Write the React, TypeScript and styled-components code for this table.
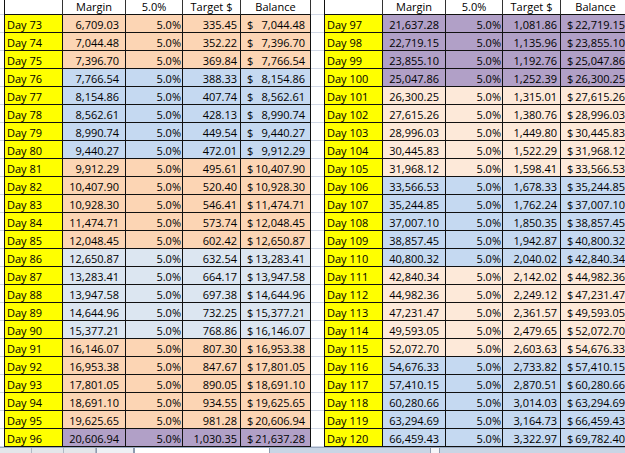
import React from 'react';
import styled, { createGlobalStyle } from 'styled-components';

const GlobalStyle = createGlobalStyle`
  html, body { margin: 0; padding: 0; background: #fff; }
  body { font-family: "Open Sans", "Liberation Sans", sans-serif; }
`;

type Tone = 'peach' | 'palePeach' | 'blue' | 'paleBlue' | 'purple';

const toneColor: Record<Tone, string> = {
  peach: '#FCD5B4',
  palePeach: '#FDE9D9',
  blue: '#C5D9F1',
  paleBlue: '#DCE6F1',
  purple: '#B1A0C7',
};

type Row = { day: number; margin: string; target: string; balance: string };

const leftRows: Row[] = [
  [73, '6,709.03', '335.45', '7,044.48'],
  [74, '7,044.48', '352.22', '7,396.70'],
  [75, '7,396.70', '369.84', '7,766.54'],
  [76, '7,766.54', '388.33', '8,154.86'],
  [77, '8,154.86', '407.74', '8,562.61'],
  [78, '8,562.61', '428.13', '8,990.74'],
  [79, '8,990.74', '449.54', '9,440.27'],
  [80, '9,440.27', '472.01', '9,912.29'],
  [81, '9,912.29', '495.61', '10,407.90'],
  [82, '10,407.90', '520.40', '10,928.30'],
  [83, '10,928.30', '546.41', '11,474.71'],
  [84, '11,474.71', '573.74', '12,048.45'],
  [85, '12,048.45', '602.42', '12,650.87'],
  [86, '12,650.87', '632.54', '13,283.41'],
  [87, '13,283.41', '664.17', '13,947.58'],
  [88, '13,947.58', '697.38', '14,644.96'],
  [89, '14,644.96', '732.25', '15,377.21'],
  [90, '15,377.21', '768.86', '16,146.07'],
  [91, '16,146.07', '807.30', '16,953.38'],
  [92, '16,953.38', '847.67', '17,801.05'],
  [93, '17,801.05', '890.05', '18,691.10'],
  [94, '18,691.10', '934.55', '19,625.65'],
  [95, '19,625.65', '981.28', '20,606.94'],
  [96, '20,606.94', '1,030.35', '21,637.28'],
].map(([day, margin, target, balance]) => ({ day, margin, target, balance } as Row));

const rightRows: Row[] = [
  [97, '21,637.28', '1,081.86', '22,719.15'],
  [98, '22,719.15', '1,135.96', '23,855.10'],
  [99, '23,855.10', '1,192.76', '25,047.86'],
  [100, '25,047.86', '1,252.39', '26,300.25'],
  [101, '26,300.25', '1,315.01', '27,615.26'],
  [102, '27,615.26', '1,380.76', '28,996.03'],
  [103, '28,996.03', '1,449.80', '30,445.83'],
  [104, '30,445.83', '1,522.29', '31,968.12'],
  [105, '31,968.12', '1,598.41', '33,566.53'],
  [106, '33,566.53', '1,678.33', '35,244.85'],
  [107, '35,244.85', '1,762.24', '37,007.10'],
  [108, '37,007.10', '1,850.35', '38,857.45'],
  [109, '38,857.45', '1,942.87', '40,800.32'],
  [110, '40,800.32', '2,040.02', '42,840.34'],
  [111, '42,840.34', '2,142.02', '44,982.36'],
  [112, '44,982.36', '2,249.12', '47,231.47'],
  [113, '47,231.47', '2,361.57', '49,593.05'],
  [114, '49,593.05', '2,479.65', '52,072.70'],
  [115, '52,072.70', '2,603.63', '54,676.33'],
  [116, '54,676.33', '2,733.82', '57,410.15'],
  [117, '57,410.15', '2,870.51', '60,280.66'],
  [118, '60,280.66', '3,014.03', '63,294.69'],
  [119, '63,294.69', '3,164.73', '66,459.43'],
  [120, '66,459.43', '3,322.97', '69,782.40'],
].map(([day, margin, target, balance]) => ({ day, margin, target, balance } as Row));

const toneFor = (day: number): Tone => {
  if (day <= 75) return 'peach';
  if (day <= 80) return 'blue';
  if (day <= 85) return 'peach';
  if (day <= 90) return 'paleBlue';
  if (day <= 95) return 'peach';
  if (day <= 100) return 'purple';
  if (day <= 105) return 'palePeach';
  if (day <= 110) return 'blue';
  if (day <= 115) return 'palePeach';
  return 'blue';
};

const Sheet = styled.div`
  width: 625px;
  height: 453px;
  overflow: hidden;
  display: flex;
  flex-direction: column;
  background: #fff;
`;

const GridArea = styled.div`
  display: flex;
  height: 447px;
  flex: none;
  overflow: hidden;
`;

const Gutter = styled.div<{ $w: number }>`
  width: ${(p) => p.$w}px;
  flex: none;
  display: grid;
  grid-template-rows: 15px repeat(24, 18px);
`;

const GutterCell = styled.div`
  box-sizing: border-box;
  border-bottom: 1px solid #d0d7e5;
`;

const Table = styled.div`
  flex: none;
  display: grid;
  grid-template-columns: 58px 63px 57px 58px 70px;
  grid-template-rows: 15px repeat(24, 18px);
  border-left: 1px solid #111;
  font-size: 11px;
  color: #000;
`;

const HeadCell = styled.div`
  box-sizing: border-box;
  border-right: 1px solid #333;
  border-bottom: 1px solid #111;
  background: #fff;
  text-align: center;
  line-height: 14px;
  white-space: nowrap;
`;

const Cell = styled.div<{ $tone: Tone; $pad: number }>`
  box-sizing: border-box;
  border-right: 1px solid #111;
  border-bottom: 1px solid #111;
  background: ${(p) => toneColor[p.$tone]};
  padding: 3px ${(p) => p.$pad}px 0 0;
  line-height: 14px;
  text-align: right;
  white-space: nowrap;
`;

const DayCell = styled.div`
  box-sizing: border-box;
  border-right: 1px solid #111;
  border-bottom: 1px solid #111;
  background: #ffff00;
  padding: 3px 0 0 2px;
  line-height: 14px;
  white-space: nowrap;
`;

const MoneyCell = styled.div<{ $tone: Tone }>`
  box-sizing: border-box;
  border-right: 1px solid #111;
  border-bottom: 1px solid #111;
  background: ${(p) => toneColor[p.$tone]};
  padding: 3px 5px 0 6px;
  line-height: 14px;
  display: flex;
  justify-content: space-between;
  white-space: nowrap;
`;

const TabBar = styled.div`
  flex: 1;
  display: flex;
  background: #c9d5e5;
  border-top: 1px solid #9aaac0;
`;

const NavArea = styled.div`
  width: 96px;
  display: flex;
  background: #e3e6ea;
`;

const NavButton = styled.div`
  flex: 1;
  border-right: 1px solid #b0b8c4;
`;

const SheetTab = styled.div<{ $w: number; $active?: boolean }>`
  width: ${(p) => p.$w}px;
  background: ${(p) => (p.$active ? '#ffffff' : '#eef1f5')};
  border-left: 1px solid #8d9bb0;
  border-right: 1px solid #8d9bb0;
`;

const ScrollThumb = styled.div`
  width: 8px;
  margin-left: 160px;
  background: #f4f6f9;
  border-left: 1px solid #8d9bb0;
  border-right: 1px solid #8d9bb0;
`;

const gridRows = Array.from({ length: 25 });

function GridGutter({ w }: { w: number }) {
  return (
    <Gutter $w={w}>
      {gridRows.map((_, i) => (
        <GutterCell key={i} />
      ))}
    </Gutter>
  );
}

function DataTable({ rows }: { rows: Row[] }) {
  return (
    <Table>
      <HeadCell />
      <HeadCell>Margin</HeadCell>
      <HeadCell>5.0%</HeadCell>
      <HeadCell>Target $</HeadCell>
      <HeadCell>Balance</HeadCell>
      {rows.map((r) => {
        const tone = toneFor(r.day);
        return (
          <React.Fragment key={r.day}>
            <DayCell>Day {r.day}</DayCell>
            <Cell $tone={tone} $pad={6}>{r.margin}</Cell>
            <Cell $tone={tone} $pad={1}>5.0%</Cell>
            <Cell $tone={tone} $pad={3}>{r.target}</Cell>
            <MoneyCell $tone={tone}>
              <span>$</span>
              <span>{r.balance}</span>
            </MoneyCell>
          </React.Fragment>
        );
      })}
    </Table>
  );
}

export default function App() {
  return (
    <>
      <GlobalStyle />
      <Sheet>
        <GridArea>
          <GridGutter w={4} />
          <DataTable rows={leftRows} />
          <GridGutter w={13} />
          <DataTable rows={rightRows} />
        </GridArea>
        <TabBar>
          <NavArea>
            <NavButton />
            <NavButton />
            <NavButton />
          </NavArea>
          <SheetTab $w={36} />
          <SheetTab $w={134} $active />
          <ScrollThumb />
        </TabBar>
      </Sheet>
    </>
  );
}
